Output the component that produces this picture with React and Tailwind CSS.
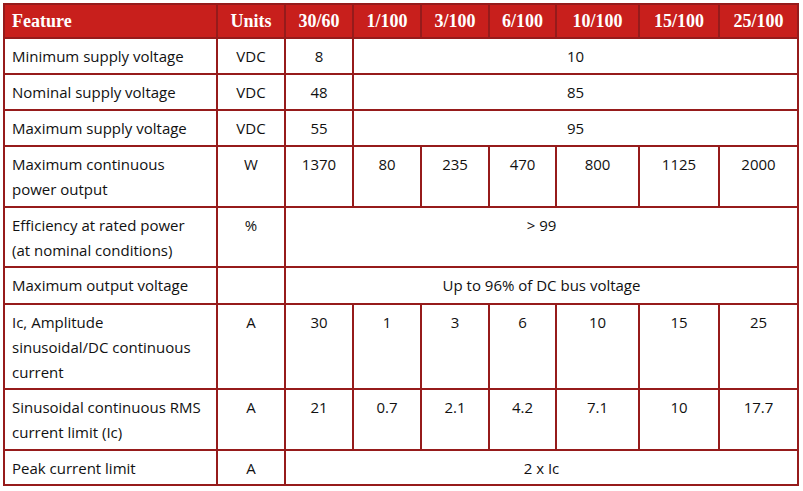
const rows = [
  { h: 'h-[36px]', label: ['Minimum supply voltage'], unit: 'VDC', first: '8', rest: '10' },
  { h: 'h-[36px]', label: ['Nominal supply voltage'], unit: 'VDC', first: '48', rest: '85' },
  { h: 'h-[36px]', label: ['Maximum supply voltage'], unit: 'VDC', first: '55', rest: '95' },
  { h: 'h-[61px]', label: ['Maximum continuous', 'power output'], unit: 'W', cells: ['1370', '80', '235', '470', '800', '1125', '2000'] },
  { h: 'h-[60px]', label: ['Efficiency at rated power', '(at nominal conditions)'], unit: '%', all: '> 99' },
  { h: 'h-[37px]', label: ['Maximum output voltage'], unit: '', all: 'Up to 96% of DC bus voltage' },
  { h: 'h-[85px]', label: ['Ic, Amplitude', 'sinusoidal/DC continuous', 'current'], unit: 'A', cells: ['30', '1', '3', '6', '10', '15', '25'] },
  { h: 'h-[61px]', label: ['Sinusoidal continuous RMS', 'current limit (Ic)'], unit: 'A', cells: ['21', '0.7', '2.1', '4.2', '7.1', '10', '17.7'] },
  { h: 'h-[35px]', label: ['Peak current limit'], unit: 'A', all: '2 x Ic' },
]

const heads = ['30/60', '1/100', '3/100', '6/100', '10/100', '15/100', '25/100']

const td = 'border-2 border-[#961b1b] align-top pt-[5px] text-center'

export default function App() {
  return (
    <div className="w-[803px] h-[491px] bg-white pt-[3px] pl-[3px] font-['Open_Sans',sans-serif] text-[15px] leading-[25px] text-[#111]">
      <table className="table-fixed border-collapse w-[796px]">
        <colgroup>
          <col className="w-[213px]" />
          <col className="w-[68px]" />
          <col className="w-[68px]" />
          <col className="w-[68px]" />
          <col className="w-[68px]" />
          <col className="w-[67px]" />
          <col className="w-[83px]" />
          <col className="w-[80px]" />
          <col className="w-[79px]" />
        </colgroup>
        <thead>
          <tr className="h-[34px] bg-[#c81f1c] text-white font-['Liberation_Serif',serif] font-bold text-[18px]">
            <th className="border-2 border-[#961b1b] text-left pl-[7px] font-bold">Feature</th>
            <th className="border-2 border-[#961b1b] font-bold">Units</th>
            {heads.map((h) => (
              <th key={h} className="border-2 border-[#961b1b] font-bold">{h}</th>
            ))}
          </tr>
        </thead>
        <tbody>
          {rows.map((r, i) => (
            <tr key={i} className={r.h}>
              <td className="border-2 border-[#961b1b] align-top pt-[5px] pl-[7px] text-left">
                {r.label.map((l) => (
                  <div key={l}>{l}</div>
                ))}
              </td>
              <td className={td}>{r.unit}</td>
              {r.first && (
                <>
                  <td className={td}>{r.first}</td>
                  <td colSpan={6} className={td}>{r.rest}</td>
                </>
              )}
              {r.cells && r.cells.map((c, j) => (
                <td key={j} className={td}>{c}</td>
              ))}
              {r.all && (
                <td colSpan={7} className={td}>{r.all}</td>
              )}
            </tr>
          ))}
        </tbody>
      </table>
    </div>
  )
}
